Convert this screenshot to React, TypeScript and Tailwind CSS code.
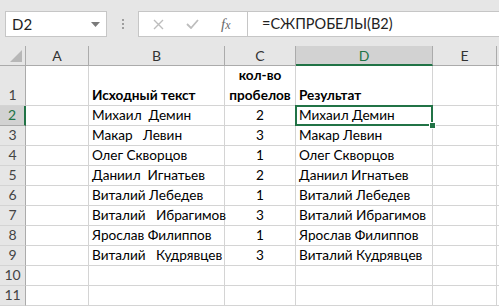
import React from 'react';

const font = { fontFamily: 'Lato, "Noto Sans", sans-serif' };

const cols = ['A', 'B', 'C', 'D', 'E'];

const rows: { b: string; c: string; d: string }[] = [
  { b: 'Михаил  Демин', c: '2', d: 'Михаил Демин' },
  { b: 'Макар   Левин', c: '3', d: 'Макар Левин' },
  { b: 'Олег Скворцов', c: '1', d: 'Олег Скворцов' },
  { b: 'Даниил  Игнатьев', c: '2', d: 'Даниил Игнатьев' },
  { b: 'Виталий Лебедев', c: '1', d: 'Виталий Лебедев' },
  { b: 'Виталий   Ибрагимов', c: '3', d: 'Виталий Ибрагимов' },
  { b: 'Ярослав Филиппов', c: '1', d: 'Ярослав Филиппов' },
  { b: 'Виталий   Кудрявцев', c: '3', d: 'Виталий Кудрявцев' },
];

const cell = 'border-r border-b border-[#d4d4d4] flex items-end px-[3px] pb-[2px] text-[13.6px] leading-[16px] text-black whitespace-pre overflow-visible';

const RowHead = ({ n, active }: { n: number; active?: boolean }) => (
  <div
    className={`flex items-end justify-center pb-[2px] text-[14px] leading-[16px] border-b ${
      active
        ? 'bg-[#d2d2d2] text-[#217346] border-r-2 border-r-[#217346] border-b-[#ababab]'
        : 'bg-[#e6e6e6] text-[#444] border-r border-r-[#ababab] border-b-[#d4d4d4]'
    }`}
  >
    {n}
  </div>
);

export default function App() {
  return (
    <div className="w-[499px] h-[306px] overflow-hidden bg-[#e6e6e6] flex flex-col" style={font}>
      {/* formula bar */}
      <div className="h-[46px] flex items-start pt-[11px] pl-[5px] shrink-0">
        <div className="w-[102px] h-[26px] bg-white border border-[#c6c6c6] flex items-center justify-between pl-[6px] pr-[6px]">
          <span className="text-[15px] text-[#222]">D2</span>
          <svg width="9" height="5" viewBox="0 0 9 5">
            <path d="M0 0h9L4.5 5z" fill="#7a7a7a" />
          </svg>
        </div>
        <div className="w-[31px] h-[26px] flex flex-col items-center justify-center gap-[2px]">
          <span className="w-[2px] h-[2px] bg-[#9e9e9e]" />
          <span className="w-[2px] h-[2px] bg-[#9e9e9e]" />
          <span className="w-[2px] h-[2px] bg-[#9e9e9e]" />
        </div>
        <div className="w-[110px] h-[26px] bg-white border border-[#c6c6c6] flex items-center">
          <svg className="ml-[14px]" width="11" height="11" viewBox="0 0 11 11">
            <path d="M1 1l9 9M10 1l-9 9" stroke="#bdbdbd" strokeWidth="1.4" />
          </svg>
          <svg className="ml-[22px]" width="13" height="10" viewBox="0 0 13 10">
            <path d="M1 5l4 4 7-8" stroke="#bdbdbd" strokeWidth="1.8" fill="none" />
          </svg>
          <span
            className="ml-[22px] text-[15px] italic text-[#6a6a6a] leading-none"
            style={{ fontFamily: '"Liberation Serif", serif' }}
          >
            f<span className="text-[12px]">x</span>
          </span>
        </div>
        <div className="flex-1 h-[26px] bg-white border-t border-b border-[#c6c6c6] flex items-center pl-[14px]">
          <span className="text-[14.5px] text-[#222]">=СЖПРОБЕЛЫ(B2)</span>
        </div>
      </div>

      {/* sheet */}
      <div className="bg-white grid grid-cols-[26px_63px_136px_71px_137px_64px_1fr] grid-rows-[20px_40px_repeat(10,20px)]">
        {/* corner */}
        <div className="bg-[#e6e6e6] border-r border-b border-[#ababab] relative">
          <svg className="absolute right-[3px] bottom-[3px]" width="12" height="12" viewBox="0 0 12 12">
            <path d="M12 0v12H0z" fill="#b7b7b7" />
          </svg>
        </div>
        {cols.map((c) => (
          <div
            key={c}
            className={`flex items-center justify-center text-[14px] ${
              c === 'D'
                ? 'bg-[#d2d2d2] text-[#217346] border-b-2 border-b-[#217346] border-r border-r-[#ababab]'
                : 'bg-[#e6e6e6] text-[#333] border-b border-b-[#ababab] border-r border-r-[#ababab]'
            }`}
          >
            {c}
          </div>
        ))}
        <div className="bg-[#e6e6e6] border-b border-[#ababab]" />

        {/* row 1 */}
        <RowHead n={1} />
        <div className={cell} />
        <div className={`${cell} font-bold`}>Исходный текст</div>
        <div className={`${cell} font-bold flex-col justify-end !items-center gap-[4px] px-0`}>
          <span>кол-во</span>
          <span>пробелов</span>
        </div>
        <div className={`${cell} font-bold`}>Результат</div>
        <div className={cell} />
        <div className={cell} />

        {rows.map((r, i) => (
          <React.Fragment key={i}>
            <RowHead n={i + 2} active={i === 0} />
            <div className={cell} />
            <div className={cell}>{r.b}</div>
            <div className={`${cell} justify-center`}>{r.c}</div>
            <div className={`${cell} ${i === 0 ? 'relative' : ''}`}>
              {r.d}
              {i === 0 && (
                <>
                  <div className="absolute -top-px -left-px -right-px -bottom-px border-2 border-[#217346] pointer-events-none" />
                  <div className="absolute -right-[4px] -bottom-[4px] w-[7px] h-[7px] bg-[#217346] border border-white" />
                </>
              )}
            </div>
            <div className={cell} />
            <div className={cell} />
          </React.Fragment>
        ))}

        {[10, 11].map((n) => (
          <React.Fragment key={n}>
            <RowHead n={n} />
            <div className={cell} />
            <div className={cell} />
            <div className={cell} />
            <div className={cell} />
            <div className={cell} />
            <div className={cell} />
          </React.Fragment>
        ))}
      </div>
    </div>
  );
}
